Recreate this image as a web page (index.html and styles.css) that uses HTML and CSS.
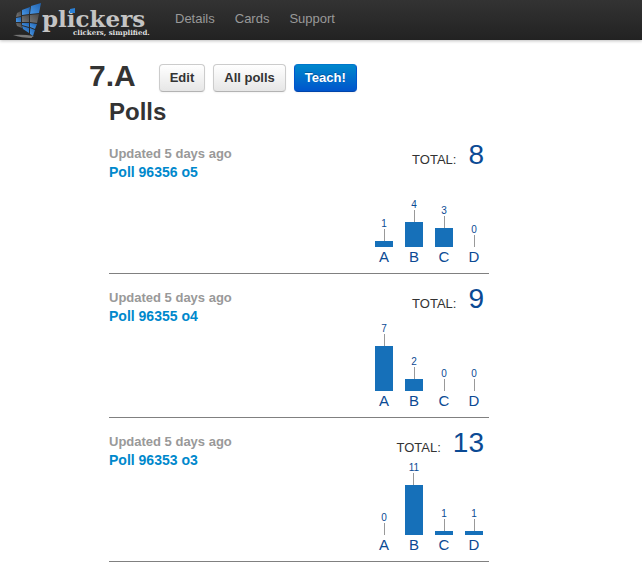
FILE: index.html
```html
<!DOCTYPE html>
<html lang="en">
<head>
<meta charset="utf-8">
<title>Plickers - 7.A</title>
<meta name="viewport" content="width=device-width, initial-scale=1">
<link rel="stylesheet" href="styles.css">
</head>
<body>
<header class="navbar">
  <a class="brand" href="#" aria-label="plickers">
    <svg width="138" height="40" viewBox="0 0 138 40">
      <defs>
        <linearGradient id="blue" x1="1" y1="0" x2="0" y2="1">
          <stop offset="0" stop-color="#1f62b0"/><stop offset="1" stop-color="#4a98e6"/>
        </linearGradient>
        <linearGradient id="gray" x1="1" y1="0" x2="0" y2="1">
          <stop offset="0" stop-color="#4a4a4a"/><stop offset="1" stop-color="#777"/>
        </linearGradient>
      </defs>
      <path d="M0 35Q10 34 21 36Q17 38 20 38Q8 38 0 35Z" fill="#777"/>
      <path d="M4 13L8 11L8 16L3 17Z" fill="url(#gray)"/>
      <path d="M9 10L17 7L16 14L9 15Z" fill="url(#blue)"/>
      <path d="M18 6L28 3L26 13L17 14Z" fill="url(#blue)"/>
      <path d="M3 18L8 17L8 22L3 22Z" fill="url(#blue)"/>
      <path d="M9 16L16 15L16 22L9 22Z" fill="url(#gray)"/>
      <path d="M17 15L26 14L24 23L17 22Z" fill="url(#gray)"/>
      <path d="M3 23L8 23L9 28L4 26Z" fill="url(#gray)"/>
      <path d="M9 23L16 23L16 27L9 25Z" fill="url(#blue)"/>
      <path d="M17 23L24 24L22 29L17 27Z" fill="url(#blue)"/>
      <path d="M9 26L16 28L16 33L10 29Z" fill="url(#blue)"/>
      <path d="M17 28L22 30L20 36L17 34Z" fill="url(#blue)"/>
      <text class="wordmark" x="29" y="27">plickers</text>
      <path d="M57 9L62 8L62 13L57 13Z" fill="#2b7fd3"/>
      <text class="tagline" x="60" y="35">clickers, simplified.</text>
    </svg>
  </a>
  <nav class="links">
    <a href="#">Details</a>
    <a href="#">Cards</a>
    <a href="#">Support</a>
  </nav>
</header>
<main class="page">
  <div class="title-row">
    <h1>7.A</h1>
    <div class="actions">
      <button class="btn" type="button">Edit</button>
      <button class="btn" type="button">All polls</button>
      <button class="btn primary" type="button">Teach!</button>
    </div>
  </div>
  <section class="polls">
    <h2>Polls</h2>
    <article class="poll">
      <div class="info"><p>Updated 5 days ago</p><a href="#">Poll 96356 o5</a></div>
      <div class="results">
        <div class="total"><span>TOTAL:</span><strong>8</strong></div>
        <div class="chart">
          <div class="col"><span class="count">1</span><i class="bar" style="height:6px"></i><b>A</b></div>
          <div class="col"><span class="count">4</span><i class="bar" style="height:25px"></i><b>B</b></div>
          <div class="col"><span class="count">3</span><i class="bar" style="height:19px"></i><b>C</b></div>
          <div class="col"><span class="count">0</span><i class="bar" style="height:0px"></i><b>D</b></div>
        </div>
      </div>
    </article>
    <article class="poll">
      <div class="info"><p>Updated 5 days ago</p><a href="#">Poll 96355 o4</a></div>
      <div class="results">
        <div class="total"><span>TOTAL:</span><strong>9</strong></div>
        <div class="chart">
          <div class="col"><span class="count">7</span><i class="bar" style="height:45px"></i><b>A</b></div>
          <div class="col"><span class="count">2</span><i class="bar" style="height:12px"></i><b>B</b></div>
          <div class="col"><span class="count">0</span><i class="bar" style="height:0px"></i><b>C</b></div>
          <div class="col"><span class="count">0</span><i class="bar" style="height:0px"></i><b>D</b></div>
        </div>
      </div>
    </article>
    <article class="poll">
      <div class="info"><p>Updated 5 days ago</p><a href="#">Poll 96353 o3</a></div>
      <div class="results">
        <div class="total"><span>TOTAL:</span><strong>13</strong></div>
        <div class="chart">
          <div class="col"><span class="count">0</span><i class="bar" style="height:0px"></i><b>A</b></div>
          <div class="col"><span class="count">11</span><i class="bar" style="height:50px"></i><b>B</b></div>
          <div class="col"><span class="count">1</span><i class="bar" style="height:4px"></i><b>C</b></div>
          <div class="col"><span class="count">1</span><i class="bar" style="height:4px"></i><b>D</b></div>
        </div>
      </div>
    </article>
  </section>
</main>
</body>
</html>
```
FILE: styles.css
```css
* { box-sizing: border-box; }
body {
  margin: 0;
  background: #fff;
  color: #333;
  font: 13px/18px "Liberation Sans", Arial, sans-serif;
}
a { text-decoration: none; }
h1, h2, p { margin: 0; }

.navbar {
  display: flex;
  align-items: center;
  gap: 24px;
  height: 40px;
  padding-left: 13px;
  background: linear-gradient(#333, #222);
  box-shadow: 0 1px 3px rgba(0, 0, 0, .25);
}
.brand, .brand svg { display: block; }
.wordmark { font: bold 23px "DejaVu Serif", serif; fill: #c4c4c4; }
.tagline { font: bold 7px "DejaVu Serif", serif; fill: #ddd; }
.links { display: flex; gap: 20px; padding-bottom: 2px; }
.links a { color: #999; }

.page { max-width: 402px; margin: 0 auto 0 89px; padding: 22px 2px 0 0; }
.title-row { display: flex; align-items: center; gap: 23px; }
h1 { font-size: 30px; line-height: 28px; padding-bottom: 4px; }
.actions { display: flex; gap: 8px; }
.btn {
  height: 28px;
  padding: 0 10px;
  border: 1px solid #ccc;
  border-bottom-color: #b3b3b3;
  border-radius: 4px;
  background: linear-gradient(#fff, #e6e6e6);
  box-shadow: 0 1px 2px rgba(0, 0, 0, .05);
  color: #333;
  font: bold 13px/18px "Liberation Sans", Arial, sans-serif;
}
.btn.primary {
  border-color: #07c #05c #04a;
  background: linear-gradient(#08c, #05c);
  color: #fff;
  text-shadow: 0 -1px 0 rgba(0, 0, 0, .25);
}

.polls { padding-left: 20px; }
h2 { font-size: 24px; line-height: 36px; }
.poll {
  display: flex;
  justify-content: space-between;
  height: 144px;
  padding: 15px 0 6px;
  border-bottom: 1px solid #808080;
}
.info { font-weight: bold; }
.info p { color: #999; }
.info a { color: #08c; font-size: 14px; }

.results {
  display: flex;
  flex-direction: column;
  justify-content: space-between;
  align-items: flex-end;
}
.total {
  display: flex;
  align-items: baseline;
  gap: 12px;
  padding-right: 5px;
  line-height: 20px;
}
.total strong { color: #0b4a94; font-size: 28px; font-weight: normal; }
.chart { display: flex; align-items: flex-end; height: 60px; }
.col {
  display: flex;
  flex-direction: column;
  align-items: center;
  width: 30px;
}
.count { color: #0b4a94; font-size: 10px; line-height: 10px; }
.count::after {
  content: "";
  display: block;
  width: 1px;
  height: 12px;
  margin: 0 auto;
  background: #999;
}
.bar { width: 18px; background: #1670b9; }
.col b { color: #0b4a94; font-size: 15px; font-weight: normal; line-height: 20px; }
```
